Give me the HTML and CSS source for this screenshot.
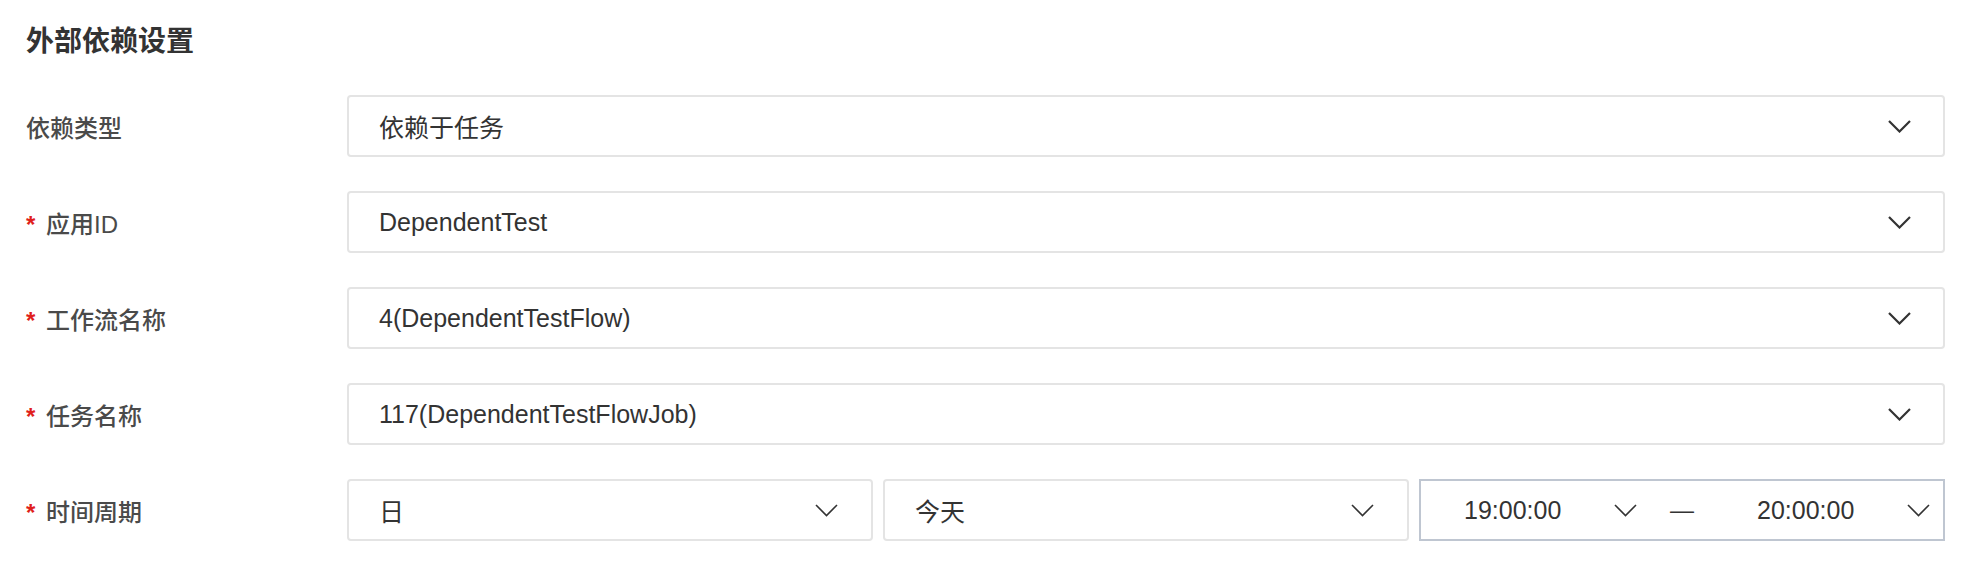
FILE: index.html
```
<!DOCTYPE html>
<html lang="zh-CN">
<head>
    <meta charset="utf-8">
    <title>外部依赖设置</title>
    <link rel="stylesheet" href="styles.css">
</head>
<body>

    <h2 class="section-title">外部依赖设置</h2>

    <div class="form">
        <div class="form-row">
            <label class="form-label">依赖类型</label>
            <div class="select">
                <span class="select-value">依赖于任务</span>
                <svg class="arrow" viewBox="0 0 23 13"><polyline points="1,1 11.5,11.5 22,1"/></svg>
            </div>
        </div>

        <div class="form-row">
            <label class="form-label"><span class="required">*</span>应用ID</label>
            <div class="select">
                <span class="select-value">DependentTest</span>
                <svg class="arrow" viewBox="0 0 23 13"><polyline points="1,1 11.5,11.5 22,1"/></svg>
            </div>
        </div>

        <div class="form-row">
            <label class="form-label"><span class="required">*</span>工作流名称</label>
            <div class="select">
                <span class="select-value">4(DependentTestFlow)</span>
                <svg class="arrow" viewBox="0 0 23 13"><polyline points="1,1 11.5,11.5 22,1"/></svg>
            </div>
        </div>

        <div class="form-row">
            <label class="form-label"><span class="required">*</span>任务名称</label>
            <div class="select">
                <span class="select-value">117(DependentTestFlowJob)</span>
                <svg class="arrow" viewBox="0 0 23 13"><polyline points="1,1 11.5,11.5 22,1"/></svg>
            </div>
        </div>

        <div class="form-row">
            <label class="form-label"><span class="required">*</span>时间周期</label>
            <div class="period">
                <div class="select">
                    <span class="select-value">日</span>
                    <svg class="arrow arrow-thin" viewBox="0 0 23 13"><polyline points="1,1 11.5,11.5 22,1"/></svg>
                </div>
                <div class="select">
                    <span class="select-value">今天</span>
                    <svg class="arrow arrow-thin" viewBox="0 0 23 13"><polyline points="1,1 11.5,11.5 22,1"/></svg>
                </div>
                <div class="time-range">
                    <div class="time-part">
                        <span class="time-value">19:00:00</span>
                        <svg class="arrow arrow-thin" viewBox="0 0 23 13"><polyline points="1,1 11.5,11.5 22,1"/></svg>
                    </div>
                    <span class="time-sep">—</span>
                    <div class="time-part">
                        <span class="time-value">20:00:00</span>
                        <svg class="arrow arrow-thin" viewBox="0 0 23 13"><polyline points="1,1 11.5,11.5 22,1"/></svg>
                    </div>
                </div>
            </div>
        </div>
    </div>

</body>
</html>
```

FILE: styles.css
```
*
{
	margin: 0;
	padding: 0;
	box-sizing: border-box;
}
body
{
	background: #fff;
	color: #333;
	font-family: "Liberation Sans", "Noto Sans CJK SC", sans-serif;
	padding: 0 23px 0 26px;
}
.section-title
{
	color: #333;
	font-size: 28px;
	font-weight: bold;
	line-height: 40px;
	padding-top: 22px;
	margin-bottom: 33px;
}

.form
{
	display: flex;
	flex-direction: column;
	gap: 34px;
}
.form-row
{
	display: grid;
	grid-template-columns: 321px 1fr;
	align-items: center;
	height: 62px;
}
.form-label
{
	color: #4a4a4a;
	font-size: 24px;
	font-weight: 500;
}
.required
{
	color: #e0201b;
	display: inline-block;
	font-weight: bold;
	width: 20px;
}

.select
{
	border: 2px solid #e4e4e4;
	border-radius: 4px;
	display: flex;
	align-items: center;
	justify-content: space-between;
	height: 62px;
	padding: 0 32px 0 30px;
}
.select-value, .time-value
{
	color: #333;
	font-size: 25px;
}
.arrow
{
	width: 23px;
	height: 13px;
	fill: none;
	stroke: #333;
	stroke-width: 2.2;
}
.arrow-thin
{
	stroke-width: 1.6;
}

.period
{
	display: grid;
	grid-template-columns: 1fr 1fr 1fr;
	gap: 10px;
}
.period .select
{
	padding-right: 33px;
}
.time-range
{
	border: 2px solid #bfc6d1;
	display: flex;
	align-items: center;
	height: 62px;
}
.time-part
{
	flex: 1;
	display: flex;
	align-items: center;
	justify-content: space-between;
	padding: 0 13px 0 43px;
}
.time-sep
{
	color: #333;
	font-size: 24px;
	text-align: center;
	width: 64px;
}
```
